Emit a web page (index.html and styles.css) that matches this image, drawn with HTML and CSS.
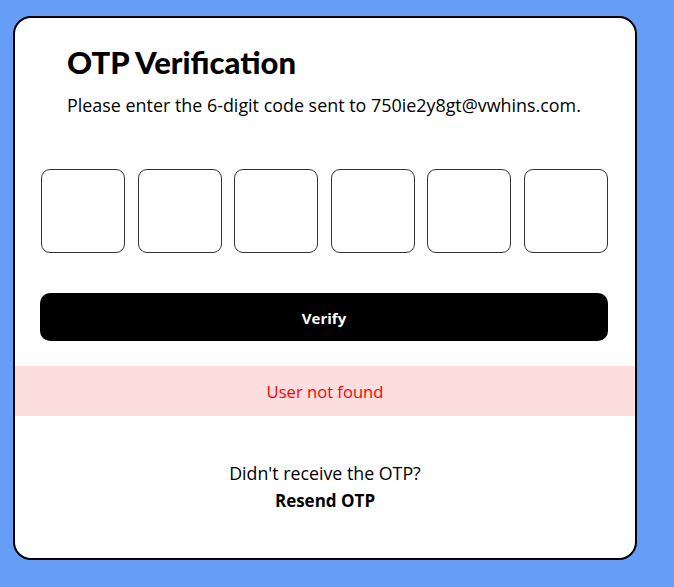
FILE: index.html
```html
<!DOCTYPE html>
<html>
<head>
<meta charset="utf-8">
<link rel="stylesheet" href="styles.css">
</head>
<body>
<div class="card">
  <div class="head">
    <h1 class="title">OTP Verification</h1>
    <p class="desc">Please enter the 6-digit code sent to 750ie2y8gt@vwhins.com.</p>
  </div>
  <div class="otp">
    <input class="box" type="text" maxlength="1">
    <input class="box" type="text" maxlength="1">
    <input class="box" type="text" maxlength="1">
    <input class="box" type="text" maxlength="1">
    <input class="box" type="text" maxlength="1">
    <input class="box" type="text" maxlength="1">
  </div>
  <div class="actions">
    <button class="verify">Verify</button>
  </div>
  <div class="error">User not found</div>
  <div class="foot">
    <div class="q">Didn't receive the OTP?</div>
    <div class="resend">Resend OTP</div>
  </div>
</div>
</body>
</html>
```
FILE: styles.css
```css
html, body { margin: 0; padding: 0; }
body {
  background: #669df6;
  width: 674px;
  height: 587px;
  font-family: "Open Sans", "Noto Sans", sans-serif;
  color: #000;
}
.card {
  box-sizing: border-box;
  margin: 16px 0 0 13px;
  width: 624px;
  height: 544px;
  background: #fff;
  border: 2px solid #000;
  border-radius: 18px;
  overflow: hidden;
}
.head { padding: 26px 52px 0; }
.title {
  margin: 0;
  font-family: "Lato", sans-serif;
  font-weight: 900;
  font-size: 31px;
  line-height: 36px;
}
.desc {
  margin: 13px 0 0;
  font-size: 17.9px;
  line-height: 24px;
  white-space: nowrap;
}
.otp {
  display: flex;
  justify-content: space-between;
  padding: 0 27px 0 26px;
  margin-top: 52px;
}
.box {
  box-sizing: border-box;
  width: 84px;
  height: 84px;
  border: 1px solid #333;
  border-radius: 9px;
  margin: 0;
  padding: 0;
  outline: none;
  background: #fff;
}
.actions { padding: 0 27px 0 25px; margin-top: 40px; }
.verify {
  display: block;
  width: 100%;
  height: 48px;
  border: none;
  border-radius: 10px;
  background: #000;
  color: #fff;
  font-family: "Open Sans", sans-serif;
  font-weight: 700;
  font-size: 15px;
  padding-top: 2px;
}
.error {
  margin-top: 25px;
  height: 50px;
  background: #fddede;
  color: #f00;
  font-size: 16.6px;
  display: flex;
  align-items: center;
  justify-content: center;
}
.foot {
  margin-top: 43px;
  text-align: center;
  font-size: 17px;
  line-height: 28px;
}
.q { font-size: 17.8px; }
.resend { font-weight: 700; }
```
